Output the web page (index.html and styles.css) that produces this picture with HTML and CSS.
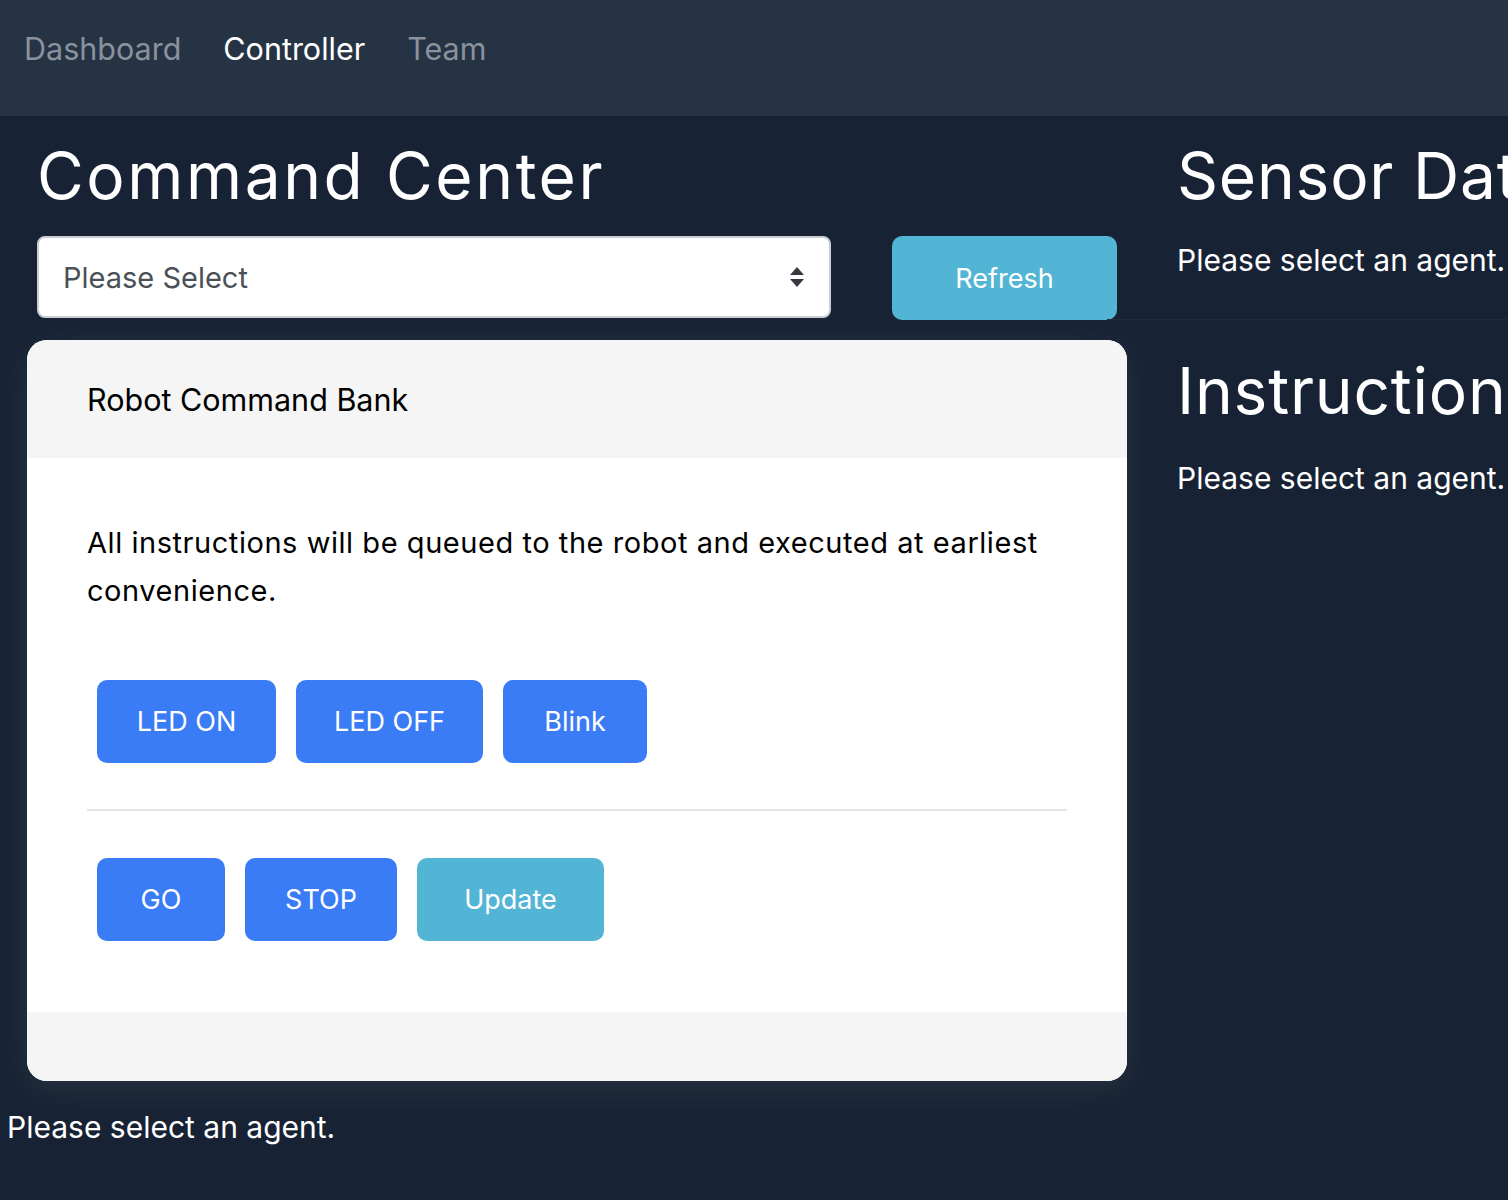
FILE: index.html
```html
<!DOCTYPE html>
<html lang="en">
<head>
<meta charset="utf-8">
<title>Controller</title>
<link rel="stylesheet" href="styles.css">
</head>
<body>
<nav class="topnav">
  <a class="nav-link" href="#">Dashboard</a>
  <a class="nav-link active" href="#">Controller</a>
  <a class="nav-link" href="#">Team</a>
</nav>
<main class="page">
  <section class="left-col">
    <h1 class="title">Command Center</h1>
    <div class="controls">
      <div class="select">
        <span class="select-text">Please Select</span>
        <svg class="select-arrows" width="16" height="22" viewBox="0 0 16 22"><path d="M8 1 L15 9 L1 9 Z M1 13 L15 13 L8 21 Z" fill="#343a40"/></svg>
      </div>
      <button class="btn btn-info refresh">Refresh</button>
    </div>
    <div class="card">
      <div class="card-header">Robot Command Bank</div>
      <div class="card-body">
        <p class="card-text">All instructions will be queued to the robot and executed at earliest convenience.</p>
        <div class="btn-row">
          <button class="btn btn-primary btn-led-on">LED ON</button>
          <button class="btn btn-primary btn-led-off">LED OFF</button>
          <button class="btn btn-primary btn-blink">Blink</button>
        </div>
        <hr class="divider">
        <div class="btn-row">
          <button class="btn btn-primary btn-go">GO</button>
          <button class="btn btn-primary btn-stop">STOP</button>
          <button class="btn btn-info btn-update">Update</button>
        </div>
      </div>
      <div class="card-footer"></div>
    </div>
  </section>
  <section class="right-col">
    <h1 class="title">Sensor Data</h1>
    <p class="status-text">Please select an agent.</p>
    <hr class="right-divider">
    <h1 class="title title-second">Instructions</h1>
    <p class="status-text">Please select an agent.</p>
  </section>
</main>
<p class="status-text bottom-status">Please select an agent.</p>
</body>
</html>
```
FILE: styles.css
```css
html, body {
  margin: 0;
  padding: 0;
}
body {
  background: #172334;
  color: #ffffff;
  font-family: "Inter", "Liberation Sans", sans-serif;
  overflow: hidden;
  width: 1508px;
  height: 1200px;
}
.topnav {
  height: 116px;
  background: #263345;
  display: flex;
  align-items: flex-start;
  padding: 29px 0 0 24px;
  box-sizing: border-box;
  gap: 42px;
}
.nav-link {
  font-size: 30.5px;
  line-height: 40px;
  color: #8a929d;
  text-decoration: none;
}
.nav-link.active {
  color: #ffffff;
}
.page {
  display: flex;
  gap: 50px;
  padding-left: 27px;
}
.left-col {
  flex: 0 0 1100px;
}
.title {
  margin: 0;
  padding-top: 21px;
  font-weight: 400;
  font-size: 64px;
  line-height: 77px;
  letter-spacing: 2.6px;
  white-space: nowrap;
}
.left-col .title {
  padding-left: 10px;
}
.controls {
  display: flex;
  justify-content: space-between;
  align-items: flex-start;
  padding: 22px 10px 0 10px;
}
.select {
  width: 794px;
  height: 82px;
  box-sizing: border-box;
  background: #ffffff;
  border: 2px solid #c9ced4;
  border-radius: 8px;
  display: flex;
  align-items: center;
  justify-content: space-between;
  padding: 0 24px 0 24px;
}
.select-text {
  color: #4a5057;
  font-size: 29px;
}
.btn {
  border: none;
  border-radius: 10px;
  color: #ffffff;
  font-family: "Inter", "Liberation Sans", sans-serif;
  font-size: 27px;
  height: 83px;
  padding: 0;
  cursor: pointer;
}
.btn-primary {
  background: #3a7bf6;
}
.btn-info {
  background: #53b5d5;
}
.refresh {
  width: 225px;
  height: 84px;
}
.btn-led-on { width: 179px; }
.btn-led-off { width: 187px; }
.btn-blink { width: 144px; }
.btn-go { width: 128px; }
.btn-stop { width: 152px; }
.btn-update { width: 187px; }
.card {
  margin-top: 20px;
  width: 1100px;
  background: #ffffff;
  border-radius: 20px;
  overflow: hidden;
  box-shadow: 0 8px 40px rgba(255, 255, 255, 0.07);
  color: #000000;
}
.card-header {
  background: #f4f5f4;
  height: 118px;
  display: flex;
  align-items: center;
  padding-left: 60px;
  font-size: 30.5px;
}
.card-body {
  padding: 61px 60px 71px 60px;
}
.card-text {
  margin: 0 0 65px 0;
  font-size: 29px;
  line-height: 48px;
  letter-spacing: 0.55px;
}
.btn-row {
  display: flex;
  gap: 20px;
  padding-left: 10px;
}
.divider {
  border: none;
  border-top: 2px solid #e4e4e4;
  margin: 46px 0 47px 0;
}
.card-footer {
  background: #f4f5f4;
  height: 69px;
}
.right-col {
  flex: 0 0 auto;
  white-space: nowrap;
}
.right-col .title {
  letter-spacing: 0.8px;
}
.status-text {
  margin: 0;
  font-size: 30px;
  line-height: 36px;
}
.right-col .status-text {
  margin-top: 28px;
}
.right-divider {
  border: none;
  border-top: 1px solid #1f2b3c;
  margin: 41px 0 0 -70px;
}
.title-second {
  padding-top: 32px;
}
.right-col .title-second + .status-text {
  margin-top: 31px;
}
.bottom-status {
  margin-top: 28px;
  padding-left: 7px;
}
```
